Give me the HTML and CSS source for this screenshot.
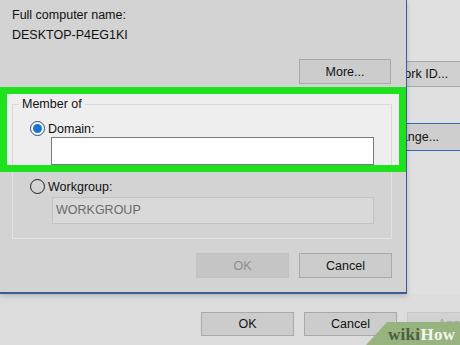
FILE: index.html
```html
<!DOCTYPE html>
<html lang="en">
<head>
  <meta charset="UTF-8">
  <meta name="viewport" content="width=device-width, initial-scale=1.0">
  <title>Computer Name/Domain Changes</title>
  <link rel="stylesheet" href="styles.css">
</head>
<body>
  <div class="top">
    <div class="dialog">
      <div class="info">
        <div>Full computer name:</div>
        <div>DESKTOP-P4EG1KI</div>
      </div>
      <div class="more-row">
        <button class="btn">More...</button>
      </div>
      <div class="highlight">
        <div class="group-top">
          <span class="legend">Member of</span>
          <label class="radio-row"><span class="radio checked"></span>Domain:</label>
          <div class="field domain"></div>
        </div>
      </div>
      <div class="group-bottom">
        <label class="radio-row"><span class="radio"></span>Workgroup:</label>
        <div class="field workgroup">WORKGROUP</div>
      </div>
      <div class="btn-row">
        <button class="btn disabled">OK</button>
        <button class="btn">Cancel</button>
      </div>
    </div>
    <div class="behind">
      <button class="btn side netid">Network ID...</button>
      <button class="btn side change">Change...</button>
    </div>
  </div>
  <div class="bottom">
    <button class="btn">OK</button>
    <button class="btn">Cancel</button>
    <button class="btn faded">Apply</button>
  </div>
  <div class="watermark"><span class="wiki">wiki</span><span class="how">How</span></div>
</body>
</html>
```

FILE: styles.css
```css
* {
  box-sizing: border-box;
}
body {
  margin: 0;
  width: 460px;
  height: 345px;
  overflow: hidden;
  position: relative;
  font-family: "Liberation Sans", Arial, sans-serif;
  font-size: 12.5px;
  color: #111;
  background: #dcdcdc;
}
.btn {
  font-family: inherit;
  font-size: 12.5px;
  color: #111;
  background: #cccccc;
  border: 1px solid #a8a8a8;
  padding: 0;
  width: 93px;
  height: 25px;
  flex: none;
}
.btn.disabled {
  background: #c5c5c5;
  border-color: #c2c2c2;
  color: #8e8e8e;
}
.top {
  display: flex;
  height: 294px;
}
.dialog {
  width: 407px;
  flex: none;
  background: #d3d3d3;
  border-right: 1px solid #3c5c98;
  border-bottom: 2px solid #3c5c98;
  box-shadow: 0 2px 5px rgba(0,0,0,0.18);
  position: relative;
  z-index: 1;
}
.info {
  padding: 5px 12px 0;
  line-height: 20px;
}
.more-row {
  display: flex;
  justify-content: flex-end;
  padding-right: 15px;
  margin-top: 14px;
}
.more-row .btn {
  width: 92px;
}
.highlight {
  margin-top: 3px;
  border: 7px solid #1fe21f;
  background: #eeeeee;
  padding-top: 10px;
}
.group-top {
  margin-left: 5px;
  width: 380px;
  height: 61px;
  border: 1px solid #d9d9d9;
  border-bottom: none;
  padding-left: 17px;
}
.legend {
  display: block;
  width: fit-content;
  margin: -8px 0 0 -11px;
  padding: 0 3px;
  line-height: 15px;
  background: #eeeeee;
}
.radio-row {
  display: flex;
  align-items: center;
  height: 17px;
}
.group-top .radio-row {
  margin-top: 8px;
}
.radio {
  width: 15px;
  height: 15px;
  border-radius: 50%;
  border: 1.5px solid #1c1c1c;
  margin-right: 3px;
  display: flex;
  align-items: center;
  justify-content: center;
}
.radio.checked {
  border: 1px solid #27487d;
  background: #fff;
}
.radio.checked::after {
  content: "";
  width: 9px;
  height: 9px;
  border-radius: 50%;
  background: #1a72d8;
}
.field {
  margin-left: 21px;
  width: 323px;
}
.domain {
  height: 28px;
  background: #fff;
  border: 1px solid #7a7a7a;
}
.group-bottom {
  margin-left: 12px;
  width: 380px;
  border: 1px solid #e2e2e2;
  border-top: none;
  padding: 6px 0 14px 17px;
}
.workgroup {
  margin-top: 2px;
  margin-left: 22px;
  width: 322px;
  height: 27px;
  line-height: 25px;
  padding-left: 3px;
  background: #d9d9d9;
  border: 1px solid #c2c2c2;
  color: #6b6b6b;
}
.btn-row {
  display: flex;
  justify-content: flex-end;
  gap: 10px;
  padding-right: 14px;
  margin-top: 14px;
}
.behind {
  flex: 1;
  background: #e0e0e0;
  overflow: hidden;
  padding-top: 61px;
  display: flex;
  flex-direction: column;
  align-items: flex-start;
}
.side {
  width: 120px;
  margin-left: -55px;
}
.netid {
  height: 26px;
  background: #d0d0d0;
  border-color: #a9a9a9;
}
.change {
  margin-top: 36px;
  height: 28px;
  background: #cecece;
  border-color: #3a68b8;
}
.bottom {
  display: flex;
  gap: 10px;
  padding: 18px 0 0 201px;
}
.bottom .btn {
  height: 24px;
}
.bottom .faded {
  background: #d2d2d2;
  border-color: #c8c8c8;
  color: #a0a0a0;
}
.watermark {
  position: absolute;
  right: 0;
  bottom: 0;
  width: 94px;
  height: 23px;
  padding-left: 22px;
  background: #98b47e;
  clip-path: polygon(21px 0, 100% 0, 100% 100%, 0 100%);
  font-family: "Liberation Serif", serif;
  font-weight: bold;
  font-size: 17px;
  line-height: 25px;
  letter-spacing: 0.3px;
}
.wiki {
  color: #4d5c43;
}
.how {
  color: #f3f6ee;
}
```
